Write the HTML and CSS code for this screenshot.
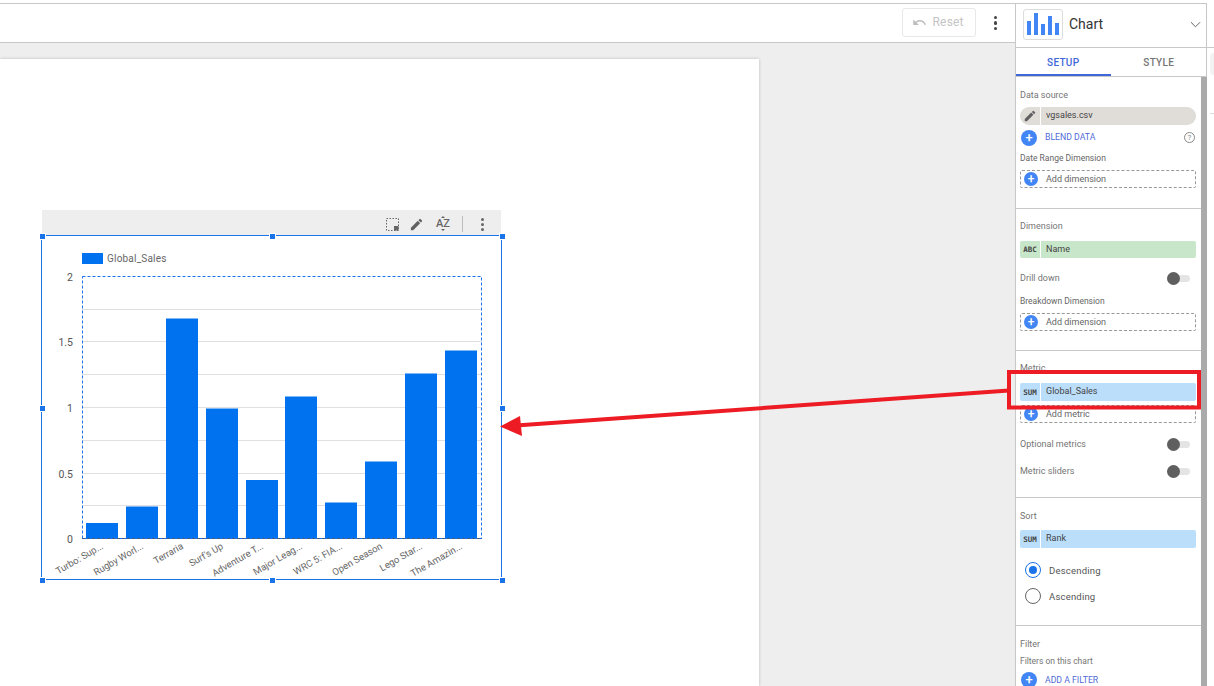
FILE: index.html
```html
<!DOCTYPE html>
<html lang="en">
<head>
<meta charset="utf-8">
<title>Chart setup</title>
<link rel="stylesheet" href="styles.css">
</head>
<body>
<div class="app">
  <div class="workspace">
    <header class="toolbar">
      <button class="reset">
        <svg class="undo" viewBox="0 0 24 24"><path d="M12.5 8c-2.65 0-5.05 1-6.9 2.6L2 7v9h9l-3.62-3.62c1.39-1.16 3.16-1.88 5.12-1.88 3.54 0 6.55 2.31 7.6 5.5l2.37-.78C21.08 11.03 17.15 8 12.5 8z"/></svg>
        Reset
      </button>
      <span class="kebab"><i></i><i></i><i></i></span>
    </header>
    <main class="canvas">
      <section class="page">
        <div class="chart-tools">
          <svg class="tool crop" viewBox="0 0 13 13"><rect x=".5" y=".5" width="12" height="12" fill="none" stroke="#666" stroke-width="1" stroke-dasharray="1.500 1.500"/><path d="M8 8h4.500v4.500H8z" fill="#666"/></svg>
          <svg class="tool edit" viewBox="0 0 24 24"><path fill="#616161" d="M3 17.250V21h3.750L17.810 9.940l-3.750-3.750L3 17.250zM20.710 7.040a1 1 0 0 0 0-1.410l-2.340-2.340a1 1 0 0 0-1.410 0l-1.830 1.830 3.750 3.750 1.830-1.830z"/></svg>
          <span class="az">AZ</span>
          <span class="tool-sep"></span>
          <span class="kebab small"><i></i><i></i><i></i></span>
        </div>
        <div class="selection">
          <span class="handle tl"></span><span class="handle tc"></span><span class="handle tr"></span>
          <span class="handle ml"></span><span class="handle mr"></span>
          <span class="handle bl"></span><span class="handle bc"></span><span class="handle br"></span>
          <svg class="plot" viewBox="0 0 460 344" width="460" height="344">
            <rect class="bar" x="40" y="17" width="21" height="11"/>
            <text class="legend" x="65" y="26">Global_Sales</text>
            <g class="grid">
              <line x1="40" x2="440" y1="73.500" y2="73.500"/>
              <line x1="40" x2="440" y1="105.500" y2="105.500"/>
              <line x1="40" x2="440" y1="138.500" y2="138.500"/>
              <line x1="40" x2="440" y1="171.500" y2="171.500"/>
              <line x1="40" x2="440" y1="204.500" y2="204.500"/>
              <line x1="40" x2="440" y1="237.500" y2="237.500"/>
              <line x1="40" x2="440" y1="269.500" y2="269.500"/>
            </g>
            <g class="ticks">
              <text x="31" y="44.500">2</text>
              <text x="31" y="110">1.5</text>
              <text x="31" y="176">1</text>
              <text x="31" y="242">0.5</text>
              <text x="31" y="306.500">0</text>
            </g>
            <rect class="bar" x="44" y="287" width="32" height="16"/>
            <rect class="bar" x="84" y="270.500" width="32" height="32.500"/>
            <rect class="bar" x="124" y="82.500" width="32" height="220.500"/>
            <rect class="bar" x="164" y="172.500" width="32" height="130.500"/>
            <rect class="bar" x="204" y="244" width="32" height="59"/>
            <rect class="bar" x="243" y="160.500" width="32" height="142.500"/>
            <rect class="bar" x="283" y="266.500" width="32" height="36.500"/>
            <rect class="bar" x="323" y="225.500" width="32" height="77.500"/>
            <rect class="bar" x="363" y="137.500" width="32" height="165.500"/>
            <rect class="bar" x="403" y="114.500" width="32" height="188.500"/>
            <line class="axis" x1="40" x2="440" y1="302.500" y2="302.500"/>
            <rect class="plot-box" x="40.500" y="40.500" width="399" height="262"/>
            <g class="labels">
              <text transform="translate(62 312) rotate(-30)">Turbo: Sup...</text>
              <text transform="translate(102 312) rotate(-30)">Rugby Worl...</text>
              <text transform="translate(142 312) rotate(-30)">Terraria</text>
              <text transform="translate(182 312) rotate(-30)">Surf's Up</text>
              <text transform="translate(222 312) rotate(-30)">Adventure T...</text>
              <text transform="translate(261 312) rotate(-30)">Major Leag...</text>
              <text transform="translate(301 312) rotate(-30)">WRC 5: FIA...</text>
              <text transform="translate(341 312) rotate(-30)">Open Season</text>
              <text transform="translate(381 312) rotate(-30)">Lego Star...</text>
              <text transform="translate(421 312) rotate(-30)">The Amazin...</text>
            </g>
          </svg>
        </div>
      </section>
    </main>
  </div>

  <aside class="panel">
    <div class="panel-head">
      <span class="chart-icon"><i class="b1"></i><i class="b2"></i><i class="b3"></i><i class="b4"></i><i class="b5"></i></span>
      <span class="chart-name">Chart</span>
      <svg class="chevron" viewBox="0 0 12 7"><path d="M1 1l5 5 5-5" fill="none" stroke="#555" stroke-width="1"/></svg>
    </div>
    <nav class="tabs">
      <span class="tab active">SETUP</span>
      <span class="tab">STYLE</span>
    </nav>
    <div class="panel-body">
      <div class="sections">
        <section class="sec sec-source">
          <div class="lbl">Data source</div>
          <div class="chip source">
            <span class="chip-tag"><svg class="pen" viewBox="0 0 24 24"><path fill="#616161" d="M3 17.250V21h3.750L17.810 9.940l-3.750-3.750L3 17.250zM20.710 7.040a1 1 0 0 0 0-1.410l-2.340-2.340a1 1 0 0 0-1.410 0l-1.830 1.830 3.750 3.750 1.830-1.830z"/></svg></span>
            <span class="chip-text">vgsales.csv</span>
          </div>
          <div class="action blend">
            <span class="plus">+</span><span class="action-text">BLEND DATA</span>
            <span class="help">?</span>
          </div>
          <div class="sub date-range">Date Range Dimension</div>
          <div class="add"><span class="plus">+</span><span>Add dimension</span></div>
        </section>
        <section class="sec sec-dim">
          <div class="lbl">Dimension</div>
          <div class="chip green"><span class="chip-tag">ABC</span><span class="chip-text">Name</span></div>
          <div class="toggle-row drill"><span>Drill down</span><span class="toggle"></span></div>
          <div class="sub breakdown">Breakdown Dimension</div>
          <div class="add"><span class="plus">+</span><span>Add dimension</span></div>
        </section>
        <section class="sec sec-metric">
          <div class="lbl">Metric</div>
          <div class="chip blue"><span class="chip-tag">SUM</span><span class="chip-text">Global_Sales</span></div>
          <div class="add add-metric"><span class="plus">+</span><span>Add metric</span></div>
          <div class="toggle-row optional"><span>Optional metrics</span><span class="toggle"></span></div>
          <div class="toggle-row sliders"><span>Metric sliders</span><span class="toggle"></span></div>
        </section>
        <section class="sec sec-sort">
          <div class="lbl">Sort</div>
          <div class="chip blue sort-chip"><span class="chip-tag">SUM</span><span class="chip-text">Rank</span></div>
          <div class="radio-row first"><span class="radio on"></span><span>Descending</span></div>
          <div class="radio-row"><span class="radio"></span><span>Ascending</span></div>
        </section>
        <section class="sec sec-filter">
          <div class="lbl">Filter</div>
          <div class="sub filters-on">Filters on this chart</div>
          <div class="action add-filter"><span class="plus">+</span><span class="action-text">ADD A FILTER</span></div>
        </section>
      </div>
      <div class="scrollbar"></div>
    </div>
  </aside>
  <div class="rail"><span class="rail-head"></span><span class="rail-pill"></span><span class="rail-line"></span></div>

  <svg class="callout" viewBox="0 0 1214 686" width="1214" height="686">
    <rect x="1009" y="372" width="190" height="35.500" fill="none" stroke="#ed1c24" stroke-width="4"/>
    <line x1="1009" y1="390.500" x2="516" y2="425.500" stroke="#ed1c24" stroke-width="4"/>
    <polygon points="500,426.500 520,416 522,436" fill="#ed1c24"/>
  </svg>
</div>
</body>
</html>
```
FILE: styles.css
```css
* { box-sizing: border-box; }
html, body { margin: 0; padding: 0; }
body { font-family: Roboto, "Liberation Sans", sans-serif; background: #fff; color: #444; }
.app { position: relative; width: 1214px; height: 686px; overflow: hidden; display: flex; margin-top: 0; padding-top: 3px; }
.app::before { content: ""; position: absolute; left: 0; right: 0; top: 3px; height: 1px; background: #c8c8c8; }
.workspace { width: 1015px; display: flex; flex-direction: column; padding-top: 1px; }
.toolbar { height: 39px; flex: none; border-bottom: 1px solid #c8c8c8; display: flex; align-items: center; justify-content: flex-end; padding-right: 18px; background: #fff; }
.reset { width: 74px; height: 29px; border: 1px solid #e8e8e8; border-radius: 3px; background: #fff; color: #c4c4c4; font: 400 12px Roboto, sans-serif; letter-spacing: .2px; display: flex; align-items: center; padding: 0 0 0 9px; gap: 6px; margin-right: 18px; position: relative; top: -1px; }
.undo { width: 15px; height: 15px; fill: #bdbdbd; }
.kebab { display: flex; flex-direction: column; gap: 2px; }
.kebab i { width: 3.500px; height: 3.500px; background: #444; border-radius: 50%; display: block; }
.kebab.small i { width: 3px; height: 3px; background: #666; }
.canvas { flex: 1; background: #eeeeee; padding-top: 16px; }
.page { position: relative; width: 759px; height: 100%; background: #fff; box-shadow: 0 0 3px rgba(0,0,0,.22); }
.chart-tools { position: absolute; left: 42px; top: 151px; width: 459px; height: 25px; background: #eeeeee; display: flex; align-items: center; justify-content: flex-end; padding: 3px 17px 0 0; }
.tool { width: 15px; height: 15px; }
.crop { width: 13px; height: 13px; margin-right: 10px; }
.edit { margin-right: 12px; }
.az { position: relative; font: 500 11px/12px Roboto, sans-serif; color: #666; margin-right: 11px; width: 15px; letter-spacing: 0; }
.az::before, .az::after { content: ""; position: absolute; left: 5px; border-left: 2px solid transparent; border-right: 2px solid transparent; }
.az::before { top: -2px; border-bottom: 2px solid #666; }
.az::after { bottom: -1px; border-top: 2px solid #666; }
.tool-sep { width: 1px; height: 16px; background: #bdbdbd; margin-right: 18px; }
.selection { position: absolute; left: 41px; top: 176px; width: 461px; height: 345px; border: 1px solid #1a73e8; }
.handle { position: absolute; width: 5px; height: 5px; background: #1a73e8; z-index: 2; box-shadow: 0 0 0 1px #fff; }
.tl { left: -2px; top: -2px; } .tc { left: 228px; top: -2px; } .tr { left: 458px; top: -2px; }
.ml { left: -2px; top: 170px; } .mr { left: 458px; top: 170px; }
.bl { left: -2px; top: 342px; } .bc { left: 228px; top: 342px; } .br { left: 458px; top: 342px; }
.plot { position: absolute; left: 0; top: 0; display: block; font-family: Roboto, sans-serif; }
.bar { fill: #0072f0; }
.legend { font-size: 10px; fill: #666; letter-spacing: .2px; }
.grid line { stroke: #e0e0e0; stroke-width: 1; }
.ticks text { font-size: 10.500px; fill: #555; text-anchor: end; }
.axis { stroke: #555; stroke-width: 1; }
.plot-box { fill: none; stroke: #1a73e8; stroke-width: 1; stroke-dasharray: 3 2; }
.labels text { font-size: 9.500px; fill: #666; text-anchor: end; }

.panel { width: 192px; flex: none; border-left: 1px solid #c8c8c8; border-right: 1px solid #c8c8c8; display: flex; flex-direction: column; background: #fff; padding-top: 1px; }
.panel-head { height: 44px; flex: none; border-bottom: 1px solid #c8c8c8; display: flex; align-items: center; padding: 0 5px 2px 7px; }
.chart-icon { width: 40px; height: 31px; border: 1px solid #dcdcdc; border-radius: 3px; display: flex; align-items: flex-end; justify-content: center; gap: 3px; padding-bottom: 4px; }
.chart-icon i { width: 4px; background: #4285f4; display: block; }
.b1 { height: 14px; } .b2 { height: 22px; } .b3 { height: 11px; } .b4 { height: 19px; } .b5 { height: 12px; }
.chart-name { font-size: 14px; color: #333; margin: 0 0 2px 6px; flex: 1; }
.chevron { width: 11px; height: 7px; }
.tabs { height: 29px; flex: none; display: flex; border-bottom: 1px solid #c8c8c8; }
.tab { font-size: 10px; font-weight: 500; width: 96px; padding-left: 1px; text-align: center; color: #757575; line-height: 29px; letter-spacing: .3px; }
.tab.active { width: 95px; padding-left: 0; color: #3f67d8; border-bottom: 2px solid #3f67d8; height: 28px; }
.panel-body { flex: 1; display: flex; min-height: 0; }
.sections { width: 185px; flex: none; }
.scrollbar { width: 6px; background: #aaaaaa; flex: none; }
.sec { border-bottom: 1px solid #c8c8c8; padding: 0 5px 0 4px; }
.sec-source { height: 132px; padding-top: 12px; }
.sec-dim { height: 142px; padding-top: 11px; }
.sec-metric { height: 147px; padding-top: 11px; }
.sec-sort { height: 128px; padding-top: 12px; }
.sec-filter { border-bottom: 0; padding-top: 12px; }
.lbl { font-size: 9px; color: #757575; line-height: 12px; }
.sub { font-size: 8.500px; color: #666; line-height: 11px; }
.chip { height: 18px; display: flex; font-size: 9px; color: #444; border-radius: 2px; line-height: 16px; margin-top: 6px; }
.chip-tag { width: 21px; flex: none; border-right: 1px solid #fff; display: flex; align-items: center; justify-content: center; font: 700 7.500px "DejaVu Sans Mono", monospace; color: #444; }
.chip-text { padding-left: 5px; }
.source { background: #e0dcd8; border-radius: 9px; }
.pen { width: 14px; height: 14px; }
.green { background: #c8e6c9; height: 17px; margin-top: 9px; }
.blue { background: #bbdefb; margin-top: 9px; }
.sort-chip { margin-top: 8px; }
.plus { width: 16px; height: 16px; border-radius: 50%; background: #4285f4; color: #fff; font: 500 13px/16px Roboto, sans-serif; text-align: center; flex: none; display: block; }
.action { display: flex; align-items: center; font-size: 8.700px; color: #4f6bd8; }
.action-text { margin: 0 0 1px 8px; }
.blend { height: 17px; margin-top: 4px; position: relative; padding-left: 1px; }
.help { position: absolute; right: 1px; top: 3px; width: 11px; height: 11px; border: 1px solid #888; border-radius: 50%; color: #888; font-size: 8px; line-height: 9px; text-align: center; }
.date-range { margin-top: 7px; }
.add { height: 18px; border: 1px dashed #999; border-radius: 2px; display: flex; align-items: center; font-size: 9px; color: #666; margin-top: 6px; padding-left: 3px; gap: 8px; }
.add .plus { width: 14px; height: 14px; font-size: 12px; line-height: 14px; }
.toggle-row { display: flex; align-items: center; justify-content: space-between; font-size: 9px; color: #757575; height: 14px; padding-right: 6px; }
.drill { margin-top: 13px; }
.breakdown { margin-top: 11px; }
.add-metric { margin-top: 4px; }
.optional { margin-top: 14px; }
.sliders { margin-top: 13px; }
.toggle { width: 23px; height: 7px; background: #e4e4e4; border-radius: 4px; position: relative; display: block; }
.toggle::before { content: ""; position: absolute; left: 0; top: -3px; width: 13px; height: 13px; border-radius: 50%; background: #5f5f5f; }
.radio-row { display: flex; align-items: center; font-size: 9.500px; color: #555; gap: 8px; height: 16px; margin-top: 10px; padding-left: 5px; letter-spacing: .2px; }
.radio-row.first { margin-top: 14px; }
.radio { width: 16px; height: 16px; border-radius: 50%; border: 1px solid #666; display: block; flex: none; position: relative; }
.radio.on { border: 1.500px solid #1a73e8; }
.radio.on::before { content: ""; position: absolute; left: 2.500px; top: 2.500px; width: 8px; height: 8px; background: #1a73e8; border-radius: 50%; }
.filters-on { margin-top: 6px; font-size: 8.500px; color: #757575; }
.add-filter { margin-top: 5px; padding-left: 1px; height: 16px; }

.rail { flex: 1; position: relative; background: #fff; }
.rail-head { position: absolute; left: 0; right: 0; top: 44px; height: 1px; background: #c8c8c8; }
.rail-pill { position: absolute; left: 3px; top: 50px; width: 4px; height: 22px; background: #f2f2f2; border-radius: 4px 0 0 4px; }
.rail-line { position: absolute; left: 3px; right: 0; top: 110px; height: 1px; background: #ddd; }
.callout { position: absolute; left: 0; top: 0; pointer-events: none; }
```
